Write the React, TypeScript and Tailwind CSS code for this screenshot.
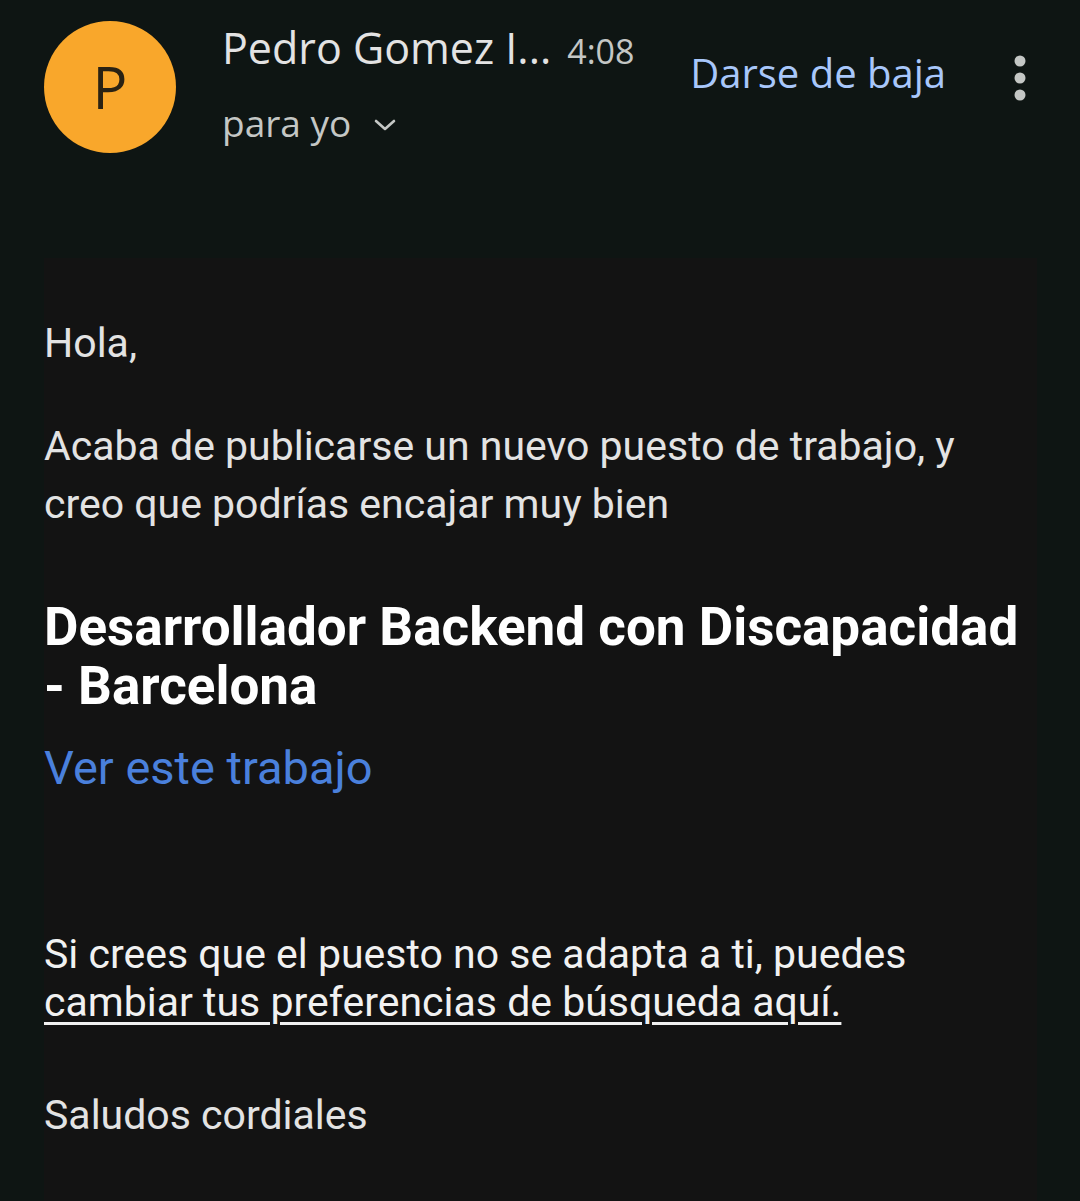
const body = "font-['Roboto',sans-serif]";

function Kebab() {
  return (
    <svg width="12" height="46" viewBox="0 0 12 46" aria-hidden="true">
      <circle cx="6" cy="6" r="5.5" fill="#c4c7c5" />
      <circle cx="6" cy="23" r="5.5" fill="#c4c7c5" />
      <circle cx="6" cy="40" r="5.5" fill="#c4c7c5" />
    </svg>
  );
}

function Chevron() {
  return (
    <svg width="24" height="14" viewBox="0 0 24 14" aria-hidden="true">
      <path d="M3 3l9 8 9-8" fill="none" stroke="#c4c7c5" strokeWidth="2.6" strokeLinecap="round" strokeLinejoin="round" />
    </svg>
  );
}

export default function App() {
  return (
    <div className="h-[1201px] w-[1080px] overflow-hidden bg-[#0e1513]">
      <header className="flex h-[153px] items-start pl-[44px] pt-[21px] font-['Open_Sans',sans-serif]">
        <div className="flex h-[132px] w-[132px] shrink-0 items-center justify-center rounded-full bg-[#f9a72b] text-[58px] leading-none text-[#2a2213]">
          P
        </div>
        <div className="ml-[46px] flex flex-col">
          <div className="flex items-baseline pt-[1px]">
            <span className="text-[43px] leading-[52px] font-medium text-[#e3e3e3]">Pedro Gomez I...</span>
            <span className="ml-[16px] text-[34px] text-[#c4c7c5]">4:08</span>
          </div>
          <div className="mt-[23px] flex items-center text-[37px] leading-[46px] text-[#c4c7c5]">
            <span>para yo</span>
            <span className="ml-[22px] mt-[4px]"><Chevron /></span>
          </div>
        </div>
        <div className="ml-auto mt-[28px] text-[40px] leading-[48px] font-medium text-[#a8c7fa]">Darse de baja</div>
        <div className="ml-[68px] mr-[54px] mt-[34px]">
          <Kebab />
        </div>
      </header>

      <main className={`mx-[44px] mt-[105px] h-[1000px] w-[993px] bg-[#131313] pt-[56px] ${body}`}>
        <p className="text-[41px] leading-[58px] text-[#e3e3e3]">Hola,</p>
        <p className="mt-[45px] text-[41px] leading-[58px] text-[#e3e3e3]">
          Acaba de publicarse un nuevo puesto de trabajo, y
          <br />
          creo que podrías encajar muy bien
        </p>
        <h1 className="mt-[65px] text-[53px] leading-[59px] font-bold text-white">
          Desarrollador Backend con Discapacidad
          <br />- Barcelona
        </h1>
        <p className="mt-[27px] text-[47px] leading-[50px] text-[#4a80dc]">Ver este trabajo</p>
        <p className="mt-[137px] text-[41px] leading-[48px] text-[#f1f1f1]">
          Si crees que el puesto no se adapta a ti, puedes
          <br />
          <span className="underline decoration-[3px] underline-offset-[6px]">cambiar tus preferencias de búsqueda aquí.</span>
        </p>
        <p className="mt-[65px] text-[41px] leading-[48px] text-[#e3e3e3]">Saludos cordiales</p>
      </main>
    </div>
  );
}
